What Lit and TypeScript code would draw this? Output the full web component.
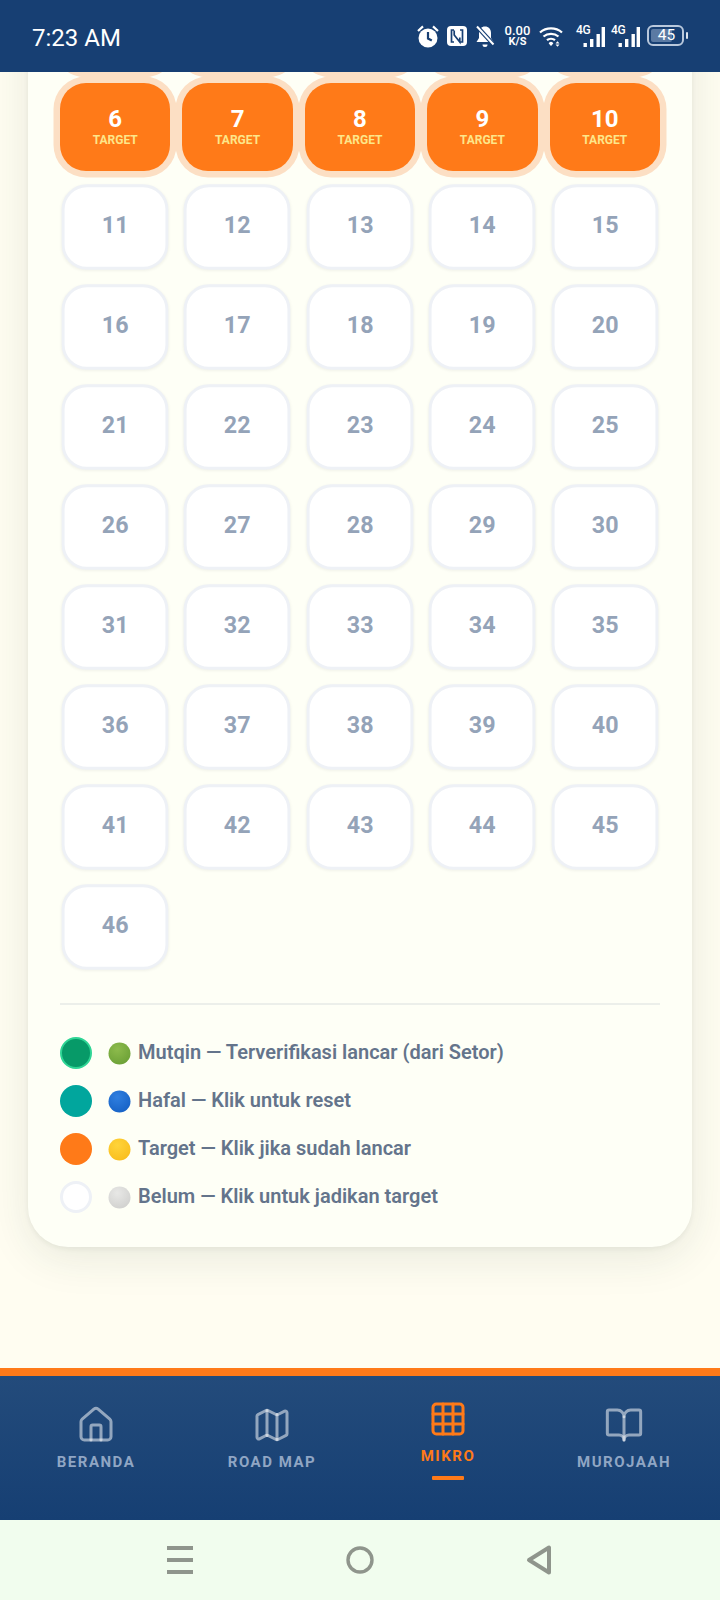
import { LitElement, html, css, svg } from "lit";
import { customElement } from "lit/decorators.js";

const icons = {
  home: svg`<path d="M15 21v-8a1 1 0 0 0-1-1h-4a1 1 0 0 0-1 1v8"/><path d="M3 10a2 2 0 0 1 .709-1.528l7-5.999a2 2 0 0 1 2.582 0l7 5.999A2 2 0 0 1 21 10v9a2 2 0 0 1-2 2H5a2 2 0 0 1-2-2z"/>`,
  map: svg`<path d="M14.106 5.553a2 2 0 0 0 1.788 0l3.659-1.83A1 1 0 0 1 21 4.619v12.764a1 1 0 0 1-.553.894l-4.553 2.277a2 2 0 0 1-1.788 0l-4.212-2.106a2 2 0 0 0-1.788 0l-3.659 1.83A1 1 0 0 1 3 19.381V6.618a1 1 0 0 1 .553-.894l4.553-2.277a2 2 0 0 1 1.788 0z"/><path d="M15 5.764v15"/><path d="M9 3.236v15"/>`,
  grid: svg`<rect x="3" y="3" width="18" height="18" rx="2"/><path d="M3 9h18"/><path d="M3 15h18"/><path d="M9 3v18"/><path d="M15 3v18"/>`,
  book: svg`<path d="M12 7v14"/><path d="M3 18a1 1 0 0 1-1-1V4a1 1 0 0 1 1-1h5a4 4 0 0 1 4 4 4 4 0 0 1 4-4h5a1 1 0 0 1 1 1v13a1 1 0 0 1-1 1h-6a3 3 0 0 0-3 3 3 3 0 0 0-3-3z"/>`,
};

const navItems = [
  { label: "BERANDA", icon: icons.home, active: false },
  { label: "ROAD MAP", icon: icons.map, active: false },
  { label: "MIKRO", icon: icons.grid, active: true },
  { label: "MUROJAAH", icon: icons.book, active: false },
];

const legend = [
  { cls: "mutqin", from: "#8dbb4c", to: "#6a9f35", text: "Mutqin — Terverifikasi lancar (dari Setor)" },
  { cls: "hafal", from: "#2f7fe0", to: "#1560c4", text: "Hafal — Klik untuk reset" },
  { cls: "target", from: "#ffd43a", to: "#f9bc1c", text: "Target — Klik jika sudah lancar" },
  { cls: "belum", from: "#e8e8e6", to: "#cfcfcd", text: "Belum — Klik untuk jadikan target" },
];

const bars = svg`<rect x="7.5" y="19" width="3.4" height="4"/><rect x="14" y="15" width="3.4" height="8"/><rect x="20.5" y="10" width="3.4" height="13"/><rect x="25.6" y="3" width="3.4" height="20"/>`;

@customElement("app-root")
export class AppRoot extends LitElement {
  static styles = css`
    :host { display: block; width: 720px; height: 1600px; font-family: Roboto, "Liberation Sans", sans-serif; }
    * { box-sizing: border-box; }
    .page { width: 720px; height: 1600px; display: flex; flex-direction: column; overflow: hidden; background: #fffdf1; }

    .status { height: 72px; flex: none; background: #173f73; color: #fff; display: flex; align-items: center; padding: 0 36px 0 32px; position: relative; z-index: 2; }
    .time { font-size: 24px; line-height: 28px; flex: 1; padding-top: 3px; }
    .sys { display: flex; align-items: center; margin-top: -1px; }
    .sys svg { display: block; flex: none; }
    .speed { width: 27px; margin: 0 8px; display: flex; flex-direction: column; align-items: center; line-height: 11px; }
    .speed b { font-size: 13px; font-weight: 500; }
    .speed i { font-size: 11px; font-style: normal; font-weight: 700; }
    .sig { position: relative; width: 29px; height: 24px; }
    .sig span { position: absolute; left: 0; top: 0; font-size: 12px; line-height: 13px; font-weight: 500; letter-spacing: -.3px; }
    .sig svg { position: absolute; left: 0; top: 0; }
    .batt { width: 37px; height: 21px; margin-left: 7px; border: 2px solid #b9c8dc; border-radius: 6px; padding: 2px; position: relative; display: flex; }
    .batt::after { content: ""; position: absolute; right: -6px; top: 5px; width: 2px; height: 7px; background: #dbe3ee; border-radius: 1px; }
    .batt .fill { width: 21px; background: #5b7aa3; border-radius: 2px; }
    .batt .num { position: absolute; left: 0; right: 0; top: 0; text-align: center; font-size: 15.5px; line-height: 17px; padding-left: 2px; }

    .scroll { flex: 1; min-height: 0; overflow: hidden; padding: 0 28px; }
    .card { margin-top: -121px; padding: 32px 32px 34px; background: #fefff6; border-radius: 40px; box-shadow: 0 2px 5px rgba(30, 50, 40, .06), 0 10px 44px rgba(30, 60, 50, .1); }
    .grid { display: grid; grid-template-columns: repeat(5, 1fr); gap: 12px; }
    .cell { height: 88px; border-radius: 26px; display: flex; flex-direction: column; align-items: center; justify-content: center; }
    .cell .n { font-size: 24px; line-height: 28px; font-weight: 700; }
    .cell .t { font-size: 12px; line-height: 13px; font-weight: 700; color: #fde68a; margin-top: 1px; }
    .cell.idle { background: #fff; color: #94a3b8; border: 3px solid #eef1f6; transform: scale(.97); box-shadow: 0 1px 3px rgba(0, 0, 0, .05); padding-bottom: 4px; }
    .cell.tgt { background: #ff7a18; color: #fff; box-shadow: 0 0 0 6.5px #fcdfc4; padding-bottom: 2px; }

    .legend { margin-top: 32px; padding-top: 32px; border-top: 2px solid #ecefea; display: flex; flex-direction: column; gap: 16px; }
    .row { display: flex; align-items: center; height: 32px; }
    .dot { width: 32px; height: 32px; border-radius: 50%; flex: none; margin-right: 16px; }
    .dot.mutqin { background: #079a68; border: 2px solid #2fd595; }
    .dot.hafal { background: #01a69d; }
    .dot.target { background: #ff7a18; }
    .dot.belum { background: #fff; border: 3px solid #eef1f6; }
    .emoji { flex: none; display: block; margin-right: 7px; }
    .lbl { font-size: 20px; line-height: 24px; font-weight: 600; color: #64748b; padding-bottom: 2px; height: 26px; }

    .accent { height: 8px; flex: none; background: #ff7a18; }
    .nav { height: 144px; flex: none; background: linear-gradient(180deg, #234b7b, #163f73); display: grid; grid-template-columns: repeat(4, 176px); padding: 29px 8px 0; }
    .item { display: flex; flex-direction: column; align-items: center; color: #90a6c4; position: relative; }
    .item svg { width: 40px; height: 40px; fill: none; stroke: rgba(255, 255, 255, .52); stroke-width: 1.8; stroke-linecap: round; stroke-linejoin: round; display: block; }
    .item span { font-size: 15px; line-height: 18px; font-weight: 700; letter-spacing: 1.5px; margin-top: 8px; white-space: nowrap; }
    .item.on { color: #ff7a18; transform: translateY(-6px); }
    .item.on svg { stroke: #ff7a18; }
    .item.on::after { content: ""; width: 32px; height: 4px; background: #ff7a18; border-radius: 1px; margin-top: 11px; }

    .sysnav { height: 80px; flex: none; background: #f1fdee; display: flex; align-items: center; }
    .sysnav svg { display: block; width: 720px; height: 80px; fill: none; stroke: #8f958c; stroke-width: 4; }
    .sysnav circle { stroke-width: 3.4; }
  `;

  private statusIcons() {
    return html`<div class="sys">
      <svg width="24" height="24" viewBox="0 0 24 24" style="margin-right:7px">
        <circle cx="12" cy="14" r="9.5" fill="#fff"/>
        <path d="M12 8v6.5l3.8 2" fill="none" stroke="#173f73" stroke-width="2.2"/>
        <path d="M2 7l5-4.6M22 7l-5-4.6" stroke="#fff" stroke-width="2.2"/>
      </svg>
      <svg width="20" height="22" viewBox="0 0 20 22" style="margin-right:7px">
        <rect x="0" y="1" width="20" height="20" rx="4" fill="#fff"/>
        <path d="M7 5H4.5v12H7M13 5h2.5v12H13M7.2 5.5v4.5l5.6 7V12.5" fill="none" stroke="#173f73" stroke-width="1.7"/>
      </svg>
      <svg width="22" height="24" viewBox="0 0 22 24">
        <path d="M11 2.5c-3.6 0-6 2.6-6 6.3V14l-2.5 4h17L17 14V8.8c0-3.7-2.4-6.3-6-6.3z" fill="#fff"/>
        <path d="M8.5 20.5h5a2.5 2.5 0 0 1-5 0z" fill="#fff"/>
        <path d="M3 2.5l16.5 18" stroke="#173f73" stroke-width="4.2"/>
        <path d="M3 2.5l16.5 18" stroke="#fff" stroke-width="2"/>
      </svg>
      <div class="speed"><b>0.00</b><i>K/S</i></div>
      <svg width="24" height="22" viewBox="0 0 24 22" style="margin-right:13px">
        <path d="M1 7.5c6.2-5.4 15.8-5.4 22 0M4.5 11.5c4.2-3.6 10.8-3.6 15 0M8 15.2c2.3-1.9 5.7-1.9 8 0" fill="none" stroke="#fff" stroke-width="2.3"/>
        <path d="M9.7 18.5a2.4 2.4 0 0 1 4.6 0l-2.3 2.4z" fill="#fff"/>
        <path d="M18.5 16.2l2 2.2h-4zM18.5 21.8l-2-2.2h4z" fill="#fff"/>
      </svg>
      <div class="sig" style="margin-right:6px"><span>4G</span>
        <svg width="29" height="24" viewBox="0 0 29 24" fill="#fff">${bars}</svg>
      </div>
      <div class="sig"><span>4G</span>
        <svg width="29" height="24" viewBox="0 0 29 24" fill="#fff">${bars}</svg>
      </div>
      <div class="batt"><div class="fill"></div><div class="num">45</div></div>
    </div>`;
  }

  render() {
    const nums = Array.from({ length: 46 }, (_, i) => i + 1);
    return html`<div class="page">
      <div class="status"><div class="time">7:23 AM</div>${this.statusIcons()}</div>
      <div class="scroll">
        <div class="card">
          <div class="grid">
            ${nums.map((n) =>
              n <= 5
                ? html`<div class="cell tgt"></div>`
                : n <= 10
                ? html`<div class="cell tgt"><div class="n">${n}</div><div class="t">TARGET</div></div>`
                : html`<div class="cell idle"><div class="n">${n}</div></div>`
            )}
          </div>
          <div class="legend">
            ${legend.map(
              (l, i) => html`<div class="row">
                <div class="dot ${l.cls}"></div>
                <svg class="emoji" width="23" height="23" viewBox="0 0 23 23">
                  <defs><radialGradient id="g${i}" cx=".4" cy=".3" r=".8"><stop offset="0" stop-color="${l.from}"/><stop offset="1" stop-color="${l.to}"/></radialGradient></defs>
                  <circle cx="11.5" cy="11.5" r="11" fill="url(#g${i})"/>
                </svg>
                <div class="lbl">${l.text}</div>
              </div>`
            )}
          </div>
        </div>
      </div>
      <div class="accent"></div>
      <nav class="nav">
        ${navItems.map(
          (it) => html`<div class="item ${it.active ? "on" : ""}">
            <svg viewBox="0 0 24 24">${it.icon}</svg>
            <span>${it.label}</span>
          </div>`
        )}
      </nav>
      <div class="sysnav">
        <svg viewBox="0 0 720 80">
          <path d="M167 28h26M167 40h26M167 52h26"/>
          <circle cx="360" cy="40" r="12"/>
          <path d="M549 27.5v25L529 40z" stroke-linejoin="round"/>
        </svg>
      </div>
    </div>`;
  }
}
